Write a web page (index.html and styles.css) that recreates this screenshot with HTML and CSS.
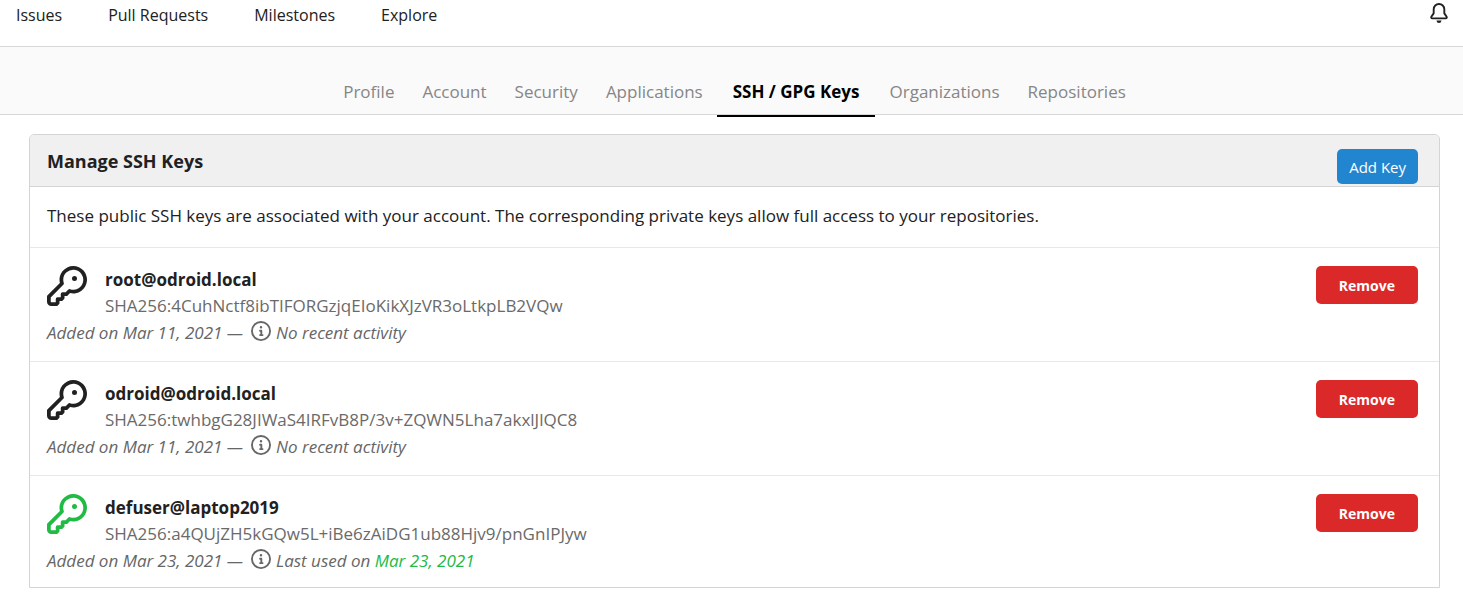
FILE: index.html
```html
<!DOCTYPE html>
<html lang="en">
<head>
<meta charset="utf-8">
<meta name="viewport" content="width=device-width, initial-scale=1">
<title>SSH / GPG Keys</title>
<link rel="stylesheet" href="styles.css">
</head>
<body>
<svg class="sprite" aria-hidden="true">
  <symbol id="icon-key" viewBox="0 0 16 16"><path fill-rule="evenodd" d="M6.5 5.5a4 4 0 112.731 3.795.75.75 0 00-.768.18L7.44 10.5H6.25a.75.75 0 00-.75.75v1.19l-.06.06H4.25a.75.75 0 00-.75.75v1.19l-.06.06H1.75a.25.25 0 01-.25-.25v-1.69l5.024-5.023a.75.75 0 00.181-.768A3.995 3.995 0 016.5 5.5zm4-5.5a5.5 5.5 0 00-5.348 6.788L.22 11.72a.75.75 0 00-.22.53v2C0 15.216.784 16 1.75 16h2a.75.75 0 00.53-.22l.5-.5a.75.75 0 00.22-.53V14h.75a.75.75 0 00.53-.22l.5-.5a.75.75 0 00.22-.53V12h.75a.75.75 0 00.53-.22l.932-.932A5.5 5.5 0 1010.5 0zm.5 6a1 1 0 100-2 1 1 0 000 2z"/></symbol>
  <symbol id="icon-info" viewBox="0 0 16 16"><path fill-rule="evenodd" d="M8 1.5a6.5 6.5 0 100 13 6.5 6.5 0 000-13zM0 8a8 8 0 1116 0A8 8 0 010 8zm6.5-.25A.75.75 0 017.25 7h1a.75.75 0 01.75.75v2.75h.25a.75.75 0 010 1.5h-2a.75.75 0 010-1.5h.25v-2h-.25a.75.75 0 01-.75-.75zM8 6a1 1 0 100-2 1 1 0 000 2z"/></symbol>
  <symbol id="icon-bell" viewBox="0 0 16 16"><path d="M8 16a2 2 0 001.985-1.75c.017-.137-.097-.25-.235-.25h-3.5c-.138 0-.252.113-.235.25A2 2 0 008 16z"/><path fill-rule="evenodd" d="M8 1.5A3.5 3.5 0 004.5 5v2.947c0 .346-.102.683-.294.97l-1.703 2.556a.018.018 0 00-.003.01l.001.006c0 .002.002.004.004.006a.017.017 0 00.006.004l.007.001h10.964l.007-.001a.016.016 0 00.006-.004.016.016 0 00.004-.006l.001-.007a.017.017 0 00-.003-.01l-1.703-2.554a1.75 1.75 0 01-.294-.97V5A3.5 3.5 0 008 1.5zM3 5a5 5 0 0110 0v2.947c0 .05.015.098.042.139l1.703 2.555A1.518 1.518 0 0113.482 13H2.518a1.518 1.518 0 01-1.263-2.36l1.703-2.554A.25.25 0 003 7.947V5z"/></symbol>
</svg>

<header class="topbar">
  <nav class="topnav">
    <a href="#">Issues</a>
    <a href="#">Pull Requests</a>
    <a href="#">Milestones</a>
    <a href="#">Explore</a>
  </nav>
  <a class="bell" href="#" aria-label="Notifications"><svg class="icon"><use href="#icon-bell"/></svg></a>
</header>

<nav class="tabs">
  <a class="tab" href="#">Profile</a>
  <a class="tab" href="#">Account</a>
  <a class="tab" href="#">Security</a>
  <a class="tab" href="#">Applications</a>
  <a class="tab active" href="#">SSH / GPG Keys</a>
  <a class="tab" href="#">Organizations</a>
  <a class="tab" href="#">Repositories</a>
</nav>

<main class="panel">
  <div class="panel-header">
    <h1 class="panel-title">Manage SSH Keys</h1>
    <button class="btn btn-add" type="button">Add Key</button>
  </div>
  <p class="intro">These public SSH keys are associated with your account. The corresponding private keys allow full access to your repositories.</p>
  <ul class="keys">
    <li class="key">
      <div class="key-info">
        <svg class="key-icon"><use href="#icon-key"/></svg>
        <div class="key-text">
          <div class="key-name">root@odroid.local</div>
          <div class="key-print">SHA256:4CuhNctf8ibTIFORGzjqEIoKikXJzVR3oLtkpLB2VQw</div>
        </div>
        <div class="key-meta">Added on Mar 11, 2021 — <svg class="icon"><use href="#icon-info"/></svg> No recent activity</div>
      </div>
      <button class="btn btn-remove" type="button">Remove</button>
    </li>
    <li class="key">
      <div class="key-info">
        <svg class="key-icon"><use href="#icon-key"/></svg>
        <div class="key-text">
          <div class="key-name">odroid@odroid.local</div>
          <div class="key-print">SHA256:twhbgG28JIWaS4IRFvB8P/3v+ZQWN5Lha7akxlJlQC8</div>
        </div>
        <div class="key-meta">Added on Mar 11, 2021 — <svg class="icon"><use href="#icon-info"/></svg> No recent activity</div>
      </div>
      <button class="btn btn-remove" type="button">Remove</button>
    </li>
    <li class="key">
      <div class="key-info">
        <svg class="key-icon recent"><use href="#icon-key"/></svg>
        <div class="key-text">
          <div class="key-name">defuser@laptop2019</div>
          <div class="key-print">SHA256:a4QUjZH5kGQw5L+iBe6zAiDG1ub88Hjv9/pnGnIPJyw</div>
        </div>
        <div class="key-meta">Added on Mar 23, 2021 — <svg class="icon"><use href="#icon-info"/></svg> Last used on <span class="recent">Mar 23, 2021</span></div>
      </div>
      <button class="btn btn-remove" type="button">Remove</button>
    </li>
  </ul>
</main>
</body>
</html>
```
FILE: styles.css
```css
* { box-sizing: border-box; }

body {
  margin: 0;
  background: #fff;
  color: #212121;
  font-family: "Segoe UI", "Open Sans", "Noto Sans", sans-serif;
  font-size: 17px;
  line-height: 26px;
}

a { color: inherit; text-decoration: none; }

.sprite { display: none; }

.icon { width: 20px; height: 20px; fill: currentColor; }

.topbar {
  display: flex;
  justify-content: space-between;
  align-items: flex-start;
  height: 46px;
  padding: 2px 14px 0 16px;
}

.topnav { display: flex; gap: 46px; font-size: 16px; }

.bell { display: flex; padding-top: 1px; }

.tabs {
  display: flex;
  justify-content: center;
  padding: 30px 23px 0 29px;
  background: #fafafa;
  border-top: 1px solid #d8d8d8;
  border-bottom: 1px solid #d8d8d8;
}

.tab {
  margin-bottom: -3px;
  padding: 2px 14px 10px;
  border-bottom: 2px solid transparent;
  color: #868686;
}

.tab.active {
  padding-inline: 16px;
  border-color: #000;
  color: #000;
  font-weight: 700;
}

.panel {
  margin: 19px 23px 16px 29px;
  border: 1px solid #d4d4d5;
  border-radius: 5px 5px 0 0;
}

.panel-header {
  display: flex;
  justify-content: space-between;
  align-items: flex-start;
  height: 52px;
  padding: 14px 21px 0 17px;
  background: #f0f0f0;
  border-bottom: 1px solid #d4d4d5;
  border-radius: 4px 4px 0 0;
}

.panel-title { margin: 0; font-size: 18px; line-height: 24px; }

.btn { border: 0; border-radius: 5px; color: #fff; font-family: inherit; }

.btn-add { height: 35px; padding: 0 12px; background: #2185d0; font-size: 15px; }

.btn-remove {
  height: 38px;
  padding: 0 23px;
  background: #db2828;
  font-size: 14px;
  font-weight: 700;
}

.intro { margin: 0; padding: 16px 17px 18px; }

.keys { margin: 0; padding: 0; list-style: none; }

.key {
  display: flex;
  justify-content: space-between;
  align-items: flex-start;
  padding: 18px 21px 14px 17px;
  border-top: 1px solid #e8e8e8;
}

.key:last-child { padding-bottom: 12px; }

.key-info { display: grid; grid-template-columns: 40px auto; column-gap: 18px; }

.key-icon { width: 40px; height: 40px; fill: currentColor; }

.key-text { padding-top: 1px; }

.key-name { font-weight: 700; }

.key-print { color: #6a6a6a; }

.key-meta { grid-column: 1 / -1; line-height: 28px; font-style: italic; color: #666; }

.key-meta .icon { margin: 0 1px 0 3px; vertical-align: -2px; }

.recent { color: #21ba45; }
```
